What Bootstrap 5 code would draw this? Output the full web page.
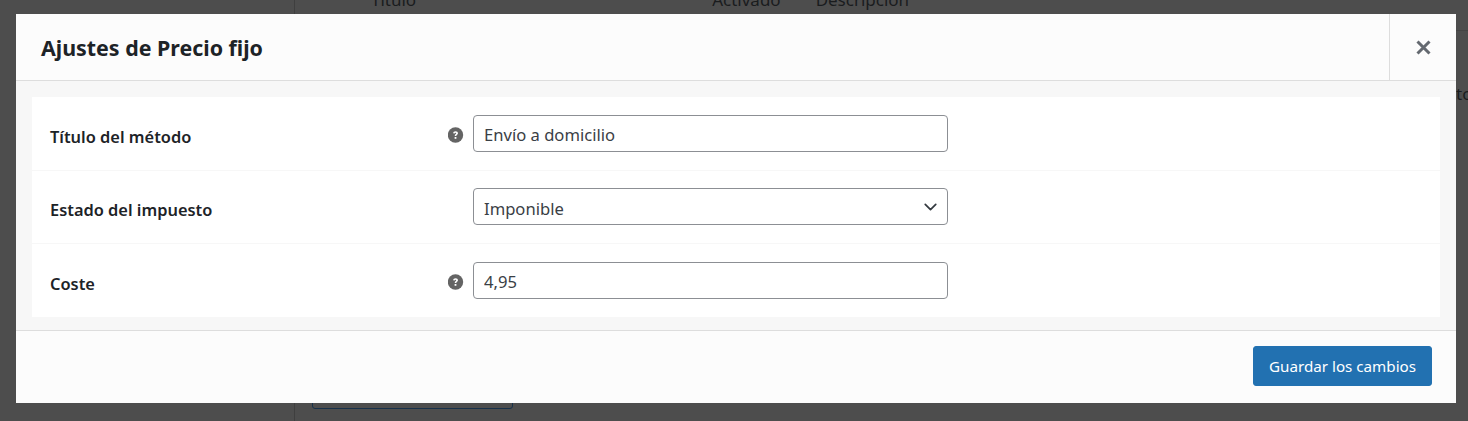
<!DOCTYPE html>
<html lang="es">
<head>
<meta charset="utf-8">
<title>Ajustes de Precio fijo</title>
<link href="https://cdn.jsdelivr.net/npm/bootstrap@5.3.0/dist/css/bootstrap.min.css" rel="stylesheet">
<style>
html,body{height:421px;overflow:hidden;}
body{background:#4d4d4d;font-family:"Noto Sans",sans-serif;color:#1d2327;}
.page-back{height:421px;overflow:hidden;background:#4d4d4d;}
.back-side{width:295px;border-right:1px solid #3f3f3f;flex:none;}
.back-main{color:#1a1c1e;font-size:17px;min-width:0;}
.back-heads{margin-top:-12px;height:24px;padding-left:76px;line-height:24px;}
.back-active{margin-left:296px;}
.back-desc{margin-left:35px;}
.back-rule{height:1px;background:#444;margin-top:18px;width:100%;}
.back-to{position:absolute;left:1456px;top:81px;color:#1a1c1e;font-size:17px;}
.back-btn{position:absolute;left:312px;top:380px;width:201px;height:29px;border:1px solid #16304a;border-radius:3px;}
.dlg-shell{position:absolute;left:16px;top:14px;width:1440px;height:389px;background:#fcfcfc;display:flex;flex-direction:column;}
.dlg-head{height:67px;flex:none;border-bottom:1px solid #dddddd;}
.dlg-title{font-size:21.4px;font-weight:700;margin:0 0 0 25px;line-height:68px;color:#1d2327;}
.dlg-close{width:67px;height:66px;border:0;border-left:1px solid #dddddd;background:transparent;padding:0;color:#646970;}
.dlg-body{height:250px;flex:none;background:#f7f7f7;padding:16px;border-bottom:1px solid #dddddd;}
.dlg-panel{background:#fff;height:220px;}
.set-row{height:73.5px;padding-left:18px;border-bottom:1px solid #f7f7f7;}
.set-row:last-child{border-bottom:0;}
.set-label{width:398px;flex:none;font-size:16.4px;font-weight:600;color:#1d2327;margin-top:8px;}
.set-help{width:25px;flex:none;margin-top:3px;}
.set-input{width:475px;height:37px;flex:none;font-size:16.6px;color:#3a4045;border:1px solid #8c8f94;border-radius:4px;padding:2px 10px 0;box-shadow:none;line-height:33px;}
select.set-input{padding-top:3px;background-size:19px 14px;background-position:right 7.5px top 11px;}
.dlg-foot{flex:1;padding:0 24px 2px 0;}
.dlg-save{background:#2271b1;border:1px solid #2271b1;color:#fff;font-size:15.2px;height:40px;width:179px;border-radius:3px;padding:0;}
</style>
</head>
<body>
<div class="page-back d-flex">
  <div class="back-side"></div>
  <div class="back-main flex-grow-1">
    <div class="back-heads d-flex"><span>Título</span><span class="back-active">Activado</span><span class="back-desc">Descripción</span></div>
    <div class="back-rule"></div>
  </div>
</div>
<span class="back-to">to</span>
<div class="back-btn"></div>
<div class="dlg-shell">
  <div class="dlg-head d-flex justify-content-between align-items-start">
    <h1 class="dlg-title">Ajustes de Precio fijo</h1>
    <button class="dlg-close d-flex align-items-center justify-content-center" type="button" aria-label="Cerrar">
      <svg width="17" height="17" viewBox="0 0 17 17"><path d="M2.5 2.5L14.5 14.5M14.5 2.5L2.5 14.5" stroke="currentColor" stroke-width="3" fill="none"/></svg>
    </button>
  </div>
  <div class="dlg-body">
    <div class="dlg-panel">
      <div class="set-row d-flex align-items-center">
        <label class="set-label">Título del método</label>
        <span class="set-help d-flex"><svg width="16" height="16" viewBox="0 0 16 16"><circle cx="7.5" cy="8" r="7.7" fill="#646464"/><path d="M5.1 6.3C5.2 4.9 6.2 4.2 7.6 4.2C9 4.2 10 5 10 6.2C10 7.6 8.3 7.7 8.3 9.1H6.7C6.7 7.2 8.2 7.2 8.2 6.3C8.2 5.9 8 5.7 7.5 5.7C7 5.7 6.8 6 6.7 6.5Z" fill="#fff"/><rect x="6.6" y="10" width="1.8" height="1.8" fill="#fff"/></svg></span>
        <input class="form-control set-input" type="text" value="Envío a domicilio">
      </div>
      <div class="set-row d-flex align-items-center">
        <label class="set-label">Estado del impuesto</label>
        <span class="set-help"></span>
        <select class="form-select set-input"><option>Imponible</option></select>
      </div>
      <div class="set-row d-flex align-items-center">
        <label class="set-label">Coste</label>
        <span class="set-help d-flex"><svg width="16" height="16" viewBox="0 0 16 16"><circle cx="7.5" cy="8" r="7.7" fill="#646464"/><path d="M5.1 6.3C5.2 4.9 6.2 4.2 7.6 4.2C9 4.2 10 5 10 6.2C10 7.6 8.3 7.7 8.3 9.1H6.7C6.7 7.2 8.2 7.2 8.2 6.3C8.2 5.9 8 5.7 7.5 5.7C7 5.7 6.8 6 6.7 6.5Z" fill="#fff"/><rect x="6.6" y="10" width="1.8" height="1.8" fill="#fff"/></svg></span>
        <input class="form-control set-input" type="text" value="4,95">
      </div>
    </div>
  </div>
  <div class="dlg-foot d-flex align-items-center justify-content-end">
    <button class="btn dlg-save" type="button">Guardar los cambios</button>
  </div>
</div>
<script src="https://cdn.jsdelivr.net/npm/bootstrap@5.3.0/dist/js/bootstrap.bundle.min.js"></script>
</body>
</html>
